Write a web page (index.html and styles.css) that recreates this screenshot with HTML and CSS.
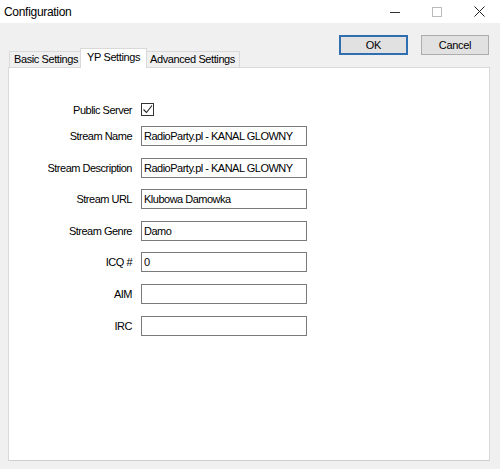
FILE: index.html
```html
<!DOCTYPE html>
<html lang="en">
<head>
    <meta charset="UTF-8">
    <meta name="viewport" content="width=device-width, initial-scale=1.0">
    <title>Configuration</title>
    <link rel="stylesheet" href="styles.css">
</head>
<body>

    <div class="window">
        <!-- Title bar -->
        <div class="titlebar">
            <span class="title">Configuration</span>
            <div class="caption">
                <span class="cap-btn">
                    <svg width="10" height="10" viewBox="0 0 10 10"><path d="M0 5.5h10" stroke="#333" stroke-width="1"/></svg>
                </span>
                <span class="cap-btn">
                    <svg width="10" height="10" viewBox="0 0 10 10"><rect x="0.5" y="0.5" width="9" height="9" fill="none" stroke="#bbb" stroke-width="1"/></svg>
                </span>
                <span class="cap-btn">
                    <svg width="11" height="11" viewBox="0 0 11 11"><path d="M0.5 0.5l10 10M10.5 0.5l-10 10" stroke="#222" stroke-width="1"/></svg>
                </span>
            </div>
        </div>

        <!-- Tabs + dialog buttons -->
        <div class="header">
            <div class="tabs">
                <div class="tab">Basic Settings</div>
                <div class="tab active">YP Settings</div>
                <div class="tab">Advanced Settings</div>
            </div>
            <div class="actions">
                <button class="btn default">OK</button>
                <button class="btn">Cancel</button>
            </div>
        </div>

        <!-- YP Settings page -->
        <div class="panel">
            <div class="form">
                <div class="row row-check">
                    <label class="label">Public Server</label>
                    <span class="checkbox">
                        <svg width="11" height="11" viewBox="0 0 11 11"><path d="M1.5 5.5l3 3l5.5-7" fill="none" stroke="#222" stroke-width="1.1"/></svg>
                    </span>
                </div>
                <div class="row">
                    <label class="label">Stream Name</label>
                    <input class="field" type="text" value="RadioParty.pl - KANAL GLOWNY">
                </div>
                <div class="row">
                    <label class="label">Stream Description</label>
                    <input class="field" type="text" value="RadioParty.pl - KANAL GLOWNY">
                </div>
                <div class="row">
                    <label class="label">Stream URL</label>
                    <input class="field" type="text" value="Klubowa Damowka">
                </div>
                <div class="row">
                    <label class="label">Stream Genre</label>
                    <input class="field" type="text" value="Damo">
                </div>
                <div class="row">
                    <label class="label">ICQ #</label>
                    <input class="field" type="text" value="0">
                </div>
                <div class="row">
                    <label class="label">AIM</label>
                    <input class="field" type="text" value="">
                </div>
                <div class="row">
                    <label class="label">IRC</label>
                    <input class="field" type="text" value="">
                </div>
            </div>
        </div>
    </div>

</body>
</html>
```

FILE: styles.css
```css
* {
    box-sizing: border-box;
}
body {
    margin: 0;
    font-family: "Liberation Sans", Arial, sans-serif;
    font-size: 11px;
    color: #000;
    background-color: #f0f0f0;
}
.window {
    width: 500px;
    height: 469px;
    background-color: #f0f0f0;
}

/* title bar */
.titlebar {
    height: 23px;
    background-color: #fff;
    display: flex;
    align-items: center;
    justify-content: space-between;
}
.title {
    padding-left: 4px;
    font-size: 12px;
    letter-spacing: -0.3px;
}
.caption {
    display: flex;
    height: 100%;
}
.cap-btn {
    width: 42px;
    display: flex;
    align-items: center;
    justify-content: center;
}

/* tabs and buttons */
.header {
    height: 44px;
    display: flex;
    justify-content: space-between;
    padding: 0 11px 0 9px;
}
.tabs {
    display: flex;
    align-items: flex-end;
    position: relative;
    z-index: 1;
}
.tab {
    height: 16px;
    line-height: 15px;
    padding: 0 4px;
    border: 1px solid #d9d9d9;
    border-bottom: none;
    margin-right: -1px;
    background-color: #f0f0f0;
    letter-spacing: -0.4px;
    white-space: nowrap;
}
.tab.active {
    height: 20px;
    line-height: 17px;
    padding: 0 6px;
    margin: 0 -2px -1px -2px;
    background-color: #fff;
    position: relative;
    z-index: 2;
}
.actions {
    display: flex;
    gap: 13px;
    margin-top: 12px;
}
.btn {
    width: 68px;
    height: 20px;
    padding: 0;
    font-family: inherit;
    font-size: 11px;
    letter-spacing: -0.3px;
    color: #000;
    background-color: #e1e1e1;
    border: 1px solid #adadad;
}
.btn.default {
    width: 69px;
    border: 2px solid #2f6fb0;
}

/* page */
.panel {
    margin: 0 10px 0 8px;
    height: 394px;
    background-color: #fff;
    border: 1px solid #d9d9d9;
    border-bottom-color: #cfcfcf;
    padding-top: 35px;
}
.form {
    display: flex;
    flex-direction: column;
    gap: 11.6px;
}
.row {
    display: flex;
    align-items: center;
    height: 20px;
}
.row-check {
    height: 13px;
    margin-bottom: -1.6px;
}
.label {
    width: 123px;
    margin-right: 9px;
    text-align: right;
    letter-spacing: -0.5px;
}
.checkbox {
    width: 13px;
    height: 13px;
    border: 1px solid #333;
    display: flex;
    align-items: center;
    justify-content: center;
}
.field {
    width: 166px;
    height: 20px;
    padding: 0 2px;
    border: 1px solid #7a7a7a;
    font-family: inherit;
    font-size: 11px;
    letter-spacing: -0.5px;
    color: #000;
    outline: none;
}
```
